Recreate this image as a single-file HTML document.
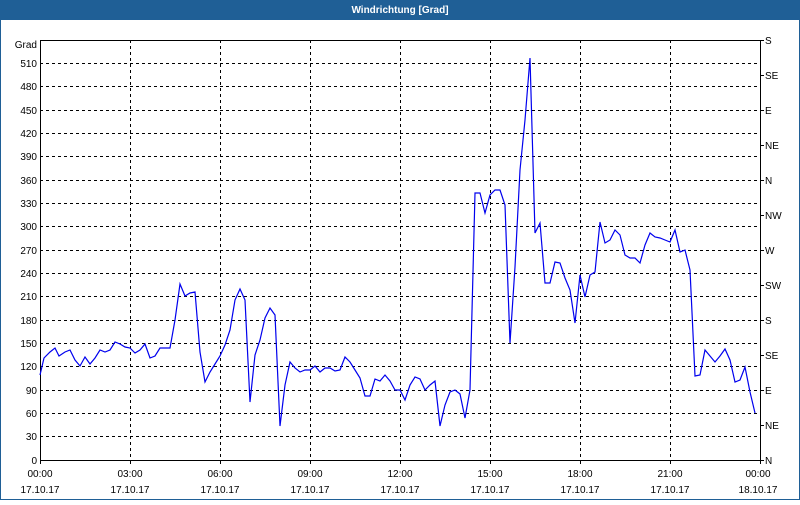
<!DOCTYPE html>
<html><head><style>
body{margin:0;width:800px;height:500px;overflow:hidden;background:#fff;font-family:"Liberation Sans",sans-serif;}
</style></head><body>
<svg width="800" height="500" xmlns="http://www.w3.org/2000/svg" font-family="Liberation Sans, sans-serif" font-size="10">
<rect x="0" y="0" width="800" height="500" fill="#fff"/>
<rect x="0" y="0" width="800" height="20" fill="#1f5f96"/>
<rect x="0" y="0" width="1" height="500" fill="#1f5f96"/>
<rect x="799" y="0" width="1" height="500" fill="#1f5f96"/>
<rect x="0" y="499" width="800" height="1" fill="#1f5f96"/>
<text x="400" y="13" fill="#fff" font-weight="bold" text-anchor="middle" font-size="10">Windrichtung [Grad]</text>
<g stroke="#000" stroke-dasharray="3,3" stroke-width="1">
<line x1="40" y1="63.5" x2="760" y2="63.5"/><line x1="40" y1="86.5" x2="760" y2="86.5"/>
<line x1="40" y1="110.5" x2="760" y2="110.5"/><line x1="40" y1="133.5" x2="760" y2="133.5"/>
<line x1="40" y1="156.5" x2="760" y2="156.5"/><line x1="40" y1="180.5" x2="760" y2="180.5"/>
<line x1="40" y1="203.5" x2="760" y2="203.5"/><line x1="40" y1="226.5" x2="760" y2="226.5"/>
<line x1="40" y1="250.5" x2="760" y2="250.5"/><line x1="40" y1="273.5" x2="760" y2="273.5"/>
<line x1="40" y1="296.5" x2="760" y2="296.5"/><line x1="40" y1="320.5" x2="760" y2="320.5"/>
<line x1="40" y1="343.5" x2="760" y2="343.5"/><line x1="40" y1="366.5" x2="760" y2="366.5"/>
<line x1="40" y1="390.5" x2="760" y2="390.5"/><line x1="40" y1="413.5" x2="760" y2="413.5"/>
<line x1="40" y1="436.5" x2="760" y2="436.5"/>
<line x1="130.5" y1="40" x2="130.5" y2="460"/><line x1="220.5" y1="40" x2="220.5" y2="460"/>
<line x1="310.5" y1="40" x2="310.5" y2="460"/><line x1="400.5" y1="40" x2="400.5" y2="460"/>
<line x1="490.5" y1="40" x2="490.5" y2="460"/><line x1="580.5" y1="40" x2="580.5" y2="460"/>
<line x1="670.5" y1="40" x2="670.5" y2="460"/>
</g>
<rect x="40.5" y="40.5" width="720" height="420" fill="none" stroke="#000" stroke-width="1"/>
<g stroke="#000" stroke-width="1">
<line x1="40.5" y1="460" x2="40.5" y2="464"/><line x1="130.5" y1="460" x2="130.5" y2="464"/>
<line x1="220.5" y1="460" x2="220.5" y2="464"/><line x1="310.5" y1="460" x2="310.5" y2="464"/>
<line x1="400.5" y1="460" x2="400.5" y2="464"/><line x1="490.5" y1="460" x2="490.5" y2="464"/>
<line x1="580.5" y1="460" x2="580.5" y2="464"/><line x1="670.5" y1="460" x2="670.5" y2="464"/>
<line x1="760.5" y1="460" x2="760.5" y2="464"/>
<line x1="760" y1="40.5" x2="764" y2="40.5"/><line x1="760" y1="75.5" x2="764" y2="75.5"/>
<line x1="760" y1="110.5" x2="764" y2="110.5"/><line x1="760" y1="145.5" x2="764" y2="145.5"/>
<line x1="760" y1="180.5" x2="764" y2="180.5"/><line x1="760" y1="215.5" x2="764" y2="215.5"/>
<line x1="760" y1="250.5" x2="764" y2="250.5"/><line x1="760" y1="285.5" x2="764" y2="285.5"/>
<line x1="760" y1="320.5" x2="764" y2="320.5"/><line x1="760" y1="355.5" x2="764" y2="355.5"/>
<line x1="760" y1="390.5" x2="764" y2="390.5"/><line x1="760" y1="425.5" x2="764" y2="425.5"/>
<line x1="760" y1="460.5" x2="764" y2="460.5"/>
</g>
<g fill="#000" text-anchor="end">
<text x="37" y="48">Grad</text>
<text x="37" y="67">510</text><text x="37" y="90">480</text><text x="37" y="114">450</text>
<text x="37" y="137">420</text><text x="37" y="160">390</text><text x="37" y="184">360</text>
<text x="37" y="207">330</text><text x="37" y="230">300</text><text x="37" y="254">270</text>
<text x="37" y="277">240</text><text x="37" y="300">210</text><text x="37" y="324">180</text>
<text x="37" y="347">150</text><text x="37" y="370">120</text><text x="37" y="394">90</text>
<text x="37" y="417">60</text><text x="37" y="440">30</text><text x="37" y="464">0</text>
</g>
<g fill="#000">
<text x="765" y="44">S</text><text x="765" y="79">SE</text><text x="765" y="114">E</text>
<text x="765" y="149">NE</text><text x="765" y="184">N</text><text x="765" y="219">NW</text>
<text x="765" y="254">W</text><text x="765" y="289">SW</text><text x="765" y="324">S</text>
<text x="765" y="359">SE</text><text x="765" y="394">E</text><text x="765" y="429">NE</text>
<text x="765" y="464">N</text>
</g>
<g fill="#000" text-anchor="middle">
<text x="40" y="477">00:00</text><text x="40" y="493">17.10.17</text>
<text x="130" y="477">03:00</text><text x="130" y="493">17.10.17</text>
<text x="220" y="477">06:00</text><text x="220" y="493">17.10.17</text>
<text x="310" y="477">09:00</text><text x="310" y="493">17.10.17</text>
<text x="400" y="477">12:00</text><text x="400" y="493">17.10.17</text>
<text x="490" y="477">15:00</text><text x="490" y="493">17.10.17</text>
<text x="580" y="477">18:00</text><text x="580" y="493">17.10.17</text>
<text x="670" y="477">21:00</text><text x="670" y="493">17.10.17</text>
<text x="758" y="477">00:00</text><text x="758" y="493">18.10.17</text>
</g>
<polyline fill="none" stroke="#0000ee" stroke-width="1.2" points="40,375 44,358 50,352 55,348 59,356 65,352 70,350 75,360 80,366 85,357 90,364 95,358 100,350 105,352 110,350 115,342 120,344 125,347 130,348 135,353 140,350 145,344 150,358 155,356 160,348 165,348 170,348 175,320 180,284 185,296 190,293 195,292 200,352 205,382 210,372 215,364 220,356 225,345 230,330 235,300 240,289 245,300 250,402 255,355 260,340 265,318 270,308 275,315 280,426 285,385 290,362 295,368 300,372 305,370 310,370 315,366 320,372 325,368 330,368 335,371 340,370 345,357 350,362 355,370 360,378 365,396 370,396 375,379 380,381 385,375 390,381 395,390 400,390 405,400 410,385 415,377 420,379 425,390 430,385 435,381 440,426 445,405 450,392 455,390 460,394 465,418 470,390 475,193 480,193 485,213 490,195 495,190 500,190 505,205 510,343 515,267 520,170 525,120 530,58 535,233 540,223 545,283 550,283 555,262 560,263 565,278 570,290 575,323 580,275 585,297 590,275 595,272 600,222 605,243 610,240 615,230 620,235 625,255 630,258 635,258 640,263 645,245 650,233 655,237 660,238 665,240 670,242 675,230 680,252 685,250 690,270 695,376 700,375 705,350 710,356 715,362 720,356 725,349 730,360 735,382 740,380 745,367 750,392 755,413"/>
</svg>
</body></html>
